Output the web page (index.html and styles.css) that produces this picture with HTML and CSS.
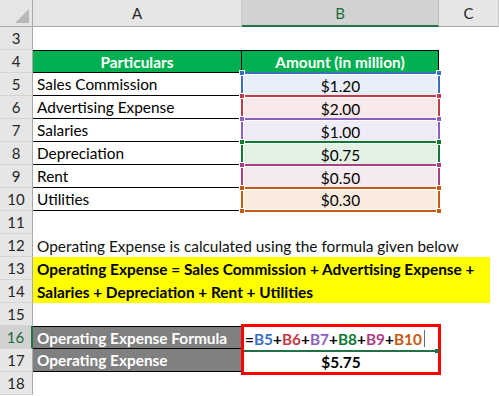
FILE: index.html
```html
<!DOCTYPE html>
<html>
<head>
<meta charset="utf-8">
<link rel="stylesheet" href="styles.css">
</head>
<body>
<div class="sheet">
  <div class="corner"><span class="tri"></span></div>
  <div class="colhead">A</div>
  <div class="colhead sel">B</div>
  <div class="colhead">C</div>

  <div class="rn">3</div><div class="cell"></div><div class="cell"></div><div class="cell"></div>

  <div class="rn">4</div>
  <div class="cell th thA">Particulars</div>
  <div class="cell th thB">Amount (in million)</div>
  <div class="cell"></div>

  <div class="rn">5</div><div class="cell ta">Sales Commission</div>
  <div class="cell ref" style="--c:#3a6fc4;--f:#e8eff9"><span class="sq tl"></span><span class="sq tr"></span>$1.20</div><div class="cell"></div>

  <div class="rn">6</div><div class="cell ta">Advertising Expense</div>
  <div class="cell ref" style="--c:#c23b46;--f:#f9e9e9"><span class="sq tl"></span><span class="sq tr"></span>$2.00</div><div class="cell"></div>

  <div class="rn">7</div><div class="cell ta">Salaries</div>
  <div class="cell ref" style="--c:#8a60c0;--f:#efecf8"><span class="sq tl"></span><span class="sq tr"></span>$1.00</div><div class="cell"></div>

  <div class="rn">8</div><div class="cell ta">Depreciation</div>
  <div class="cell ref" style="--c:#0c7a33;--f:#e3f1e5"><span class="sq tl"></span><span class="sq tr"></span>$0.75</div><div class="cell"></div>

  <div class="rn">9</div><div class="cell ta">Rent</div>
  <div class="cell ref" style="--c:#ad3d84;--f:#f6eaf1"><span class="sq tl"></span><span class="sq tr"></span>$0.50</div><div class="cell"></div>

  <div class="rn">10</div><div class="cell ta">Utilities</div>
  <div class="cell ref last" style="--c:#c55a11;--f:#fbebdf"><span class="sq tl"></span><span class="sq tr"></span><span class="sq bl"></span><span class="sq br"></span>$0.30</div><div class="cell"></div>

  <div class="rn">11</div><div class="cell wide"></div>

  <div class="rn">12</div><div class="cell wide txt">Operating Expense is calculated using the formula given below</div>

  <div class="rn">13</div><div class="cell wide hl">Operating Expense = Sales Commission + Advertising Expense +</div>
  <div class="rn">14</div><div class="cell wide hl">Salaries + Depreciation + Rent + Utilities</div>

  <div class="rn">15</div><div class="cell wide"></div>

  <div class="rn rsel">16</div>
  <div class="cell gr gtop">Operating Expense Formula</div>
  <div class="redbox">
    <div class="formula">=<span class="r1">B5</span>+<span class="r2">B6</span>+<span class="r3">B7</span>+<span class="r4">B8</span>+<span class="r5">B9</span>+<span class="r6">B10</span><span class="caret"></span><span class="gsq"></span></div>
    <div class="result">$5.75</div>
  </div>
  <div class="cell"></div>

  <div class="rn">17</div>
  <div class="cell gr">Operating Expense</div>
  <div class="cell"></div>

  <div class="rn">18</div><div class="cell wide"></div>
</div>
</body>
</html>
```

FILE: styles.css
```css
* { box-sizing: border-box; }
html, body { margin: 0; padding: 0; background: #fff; }
body { width: 499px; height: 396px; overflow: hidden; }

.sheet {
  display: grid;
  grid-template-columns: 33px 209px 197px 60px;
  grid-template-rows: 27px;
  grid-auto-rows: 23px;
  font-family: Lato, "Liberation Sans", sans-serif;
  font-size: 15.4px;
  color: #000;
}

.corner {
  background: #e6e6e6;
  border-right: 1px solid #a9a9a9;
  border-bottom: 1px solid #a9a9a9;
  position: relative;
}
.tri {
  position: absolute;
  right: 3px;
  bottom: 3px;
  width: 0; height: 0;
  border-left: 14px solid transparent;
  border-bottom: 14px solid #b8b8b8;
}

.colhead {
  background: #e6e6e6;
  border-right: 1px solid #c8c8c8;
  border-bottom: 1px solid #a9a9a9;
  display: flex;
  align-items: center;
  justify-content: center;
  color: #262626;
  font-size: 15px;
}
.colhead.sel {
  background: #d2d2d2;
  color: #1d6b3e;
  border-bottom: 2px solid #217346;
  border-right: 1px solid #bdbdbd;
}

.rn {
  background: #e6e6e6;
  border-right: 1px solid #a9a9a9;
  border-bottom: 1px solid #d4d4d4;
  display: flex;
  align-items: center;
  justify-content: center;
  color: #262626;
  font-size: 15px;
}
.rn.rsel {
  background: #d2d2d2;
  color: #1d6b3e;
  border-right: 2px solid #217346;
}

.cell {
  display: flex;
  align-items: center;
  white-space: nowrap;
  min-width: 0;
}
.wide { grid-column: 2 / span 3; }
.txt { padding-left: 4px; color: #111; }

.th {
  background: #00b050;
  color: #fff;
  font-weight: 700;
  justify-content: center;
  border-top: 1px solid #000;
  border-bottom: 1px solid #000;
  border-right: 1px solid #000;
}
.ta {
  padding-left: 4px;
  border-bottom: 1px solid #000;
}

.ref {
  position: relative;
  margin: -1px -1px 0 -1px;
  border: 2px solid var(--c);
  border-bottom: none;
  background: var(--f);
  box-shadow: inset 0 0 0 1px #fff;
  justify-content: center;
  padding-top: 1px;
}
.ref.last {
  border-bottom: 2px solid var(--c);
  margin-bottom: -1px;
}
.sq {
  position: absolute;
  width: 6px;
  height: 6px;
  background: var(--c);
  border: 1px solid #fff;
}
.sq.tl { left: -4px; top: -4px; }
.sq.tr { right: -4px; top: -4px; }
.sq.bl { left: -4px; bottom: -4px; }
.sq.br { right: -4px; bottom: -4px; }

.hl {
  background: #ffff00;
  font-weight: 700;
  padding-left: 4px;
  margin-right: 9px;
}

.gr {
  background: #808080;
  color: #fff;
  font-weight: 700;
  padding-left: 4px;
  border-bottom: 1px solid #000;
}
.gtop { border-top: 1px solid #000; }

.redbox {
  grid-row: span 2;
  margin: -2px -2px -3px -1px;
  border: 3px solid #ff0000;
  display: flex;
  flex-direction: column;
  position: relative;
  z-index: 1;
}
.formula {
  height: 25px;
  border-bottom: 2px solid #217346;
  display: flex;
  align-items: center;
  font-weight: 700;
  padding-left: 1px;
  position: relative;
}
.r1 { color: #3a6fc4; }
.r2 { color: #c23b46; }
.r3 { color: #8a60c0; }
.r4 { color: #0c7a33; }
.r5 { color: #ad3d84; }
.r6 { color: #c55a11; }
.caret {
  display: inline-block;
  width: 1px;
  height: 17px;
  background: #6e6e6e;
  margin-left: 2px;
}
.gsq {
  position: absolute;
  right: -1px;
  bottom: -3px;
  width: 4px;
  height: 4px;
  background: #217346;
}
.result {
  flex: 1;
  display: flex;
  align-items: center;
  justify-content: center;
  font-weight: 700;
}
```
